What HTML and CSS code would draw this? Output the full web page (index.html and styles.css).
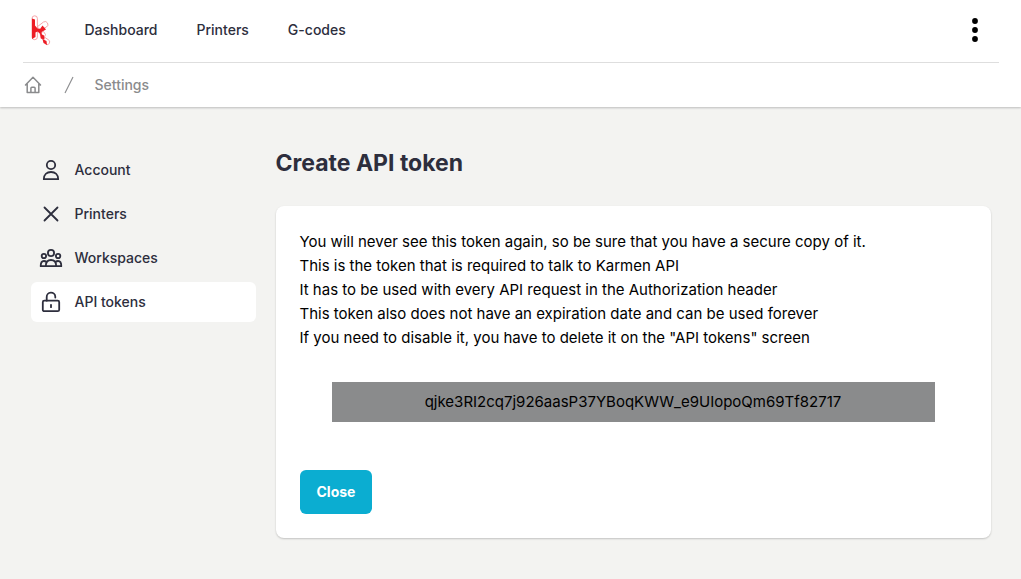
FILE: index.html
```html
<!DOCTYPE html>
<html lang="en">
<head>
<meta charset="utf-8">
<meta name="viewport" content="width=device-width, initial-scale=1">
<title>Create API token</title>
<link rel="stylesheet" href="styles.css">
</head>
<body>
<header class="header">
  <div class="container">
    <div class="topbar">
      <a class="logo" href="#" aria-label="Karmen">
        <svg width="20" height="32" viewBox="0 0 20 32" fill="none">
          <g stroke="#f28f94" stroke-width=".8" fill="#fff">
            <path d="M1 4.500a2.700 2.700 0 0 1 5.400 0v18.500a2.700 2.700 0 0 1-5.400 0z"/>
            <path d="M6 13l6.500-5a2.900 2.900 0 1 1 3 5L10 16z"/>
            <path d="M9 19l3.500-1.500 2 3-1.500 3.500-3 .5z"/>
            <path d="M11.500 25l2.500-1.500 3 2a2.500 2.500 0 1 1-2 5z"/>
          </g>
          <path d="M1 4.500l3 1v6l2.500 3 2.500.5 2.500-3.500 3.500 4-4.500 2.500.5 3.500-4.500-4-2 1v4.500l-3.500 2z" fill="#ed1c24"/>
          <path d="M9 19.500l4 2 .5 4-3.500-1zM11.500 25l4 2 .5 4-3.500-2z" fill="#ed1c24"/>
        </svg>
      </a>
      <nav class="nav">
        <a href="#">Dashboard</a>
        <a href="#">Printers</a>
        <a href="#">G-codes</a>
      </nav>
      <button class="more" type="button" aria-label="Menu">
        <svg width="6" height="26" viewBox="0 0 6 26"><circle cx="3" cy="4" r="2.900"/><circle cx="3" cy="13" r="2.900"/><circle cx="3" cy="22" r="2.900"/></svg>
      </button>
    </div>
    <nav class="crumbs" aria-label="Breadcrumb">
      <a href="#" aria-label="Home">
        <svg width="18" height="18" viewBox="0 0 18 18" fill="none" stroke="currentColor" stroke-width="1.500" stroke-linejoin="round" stroke-linecap="round"><path d="M1.500 9L9 1.300 16.500 9M3.200 7.500v9h11.600v-9M6.900 16.500v-4.300q0-1 1-1h2.200q1 0 1 1v4.300"/></svg>
      </a>
      <svg class="slash" width="10" height="18" viewBox="0 0 10 18" fill="none" stroke="currentColor" stroke-width="1.100"><path d="M1 17L9 1"/></svg>
      <a href="#">Settings</a>
    </nav>
  </div>
</header>
<div class="container page">
  <nav class="sidebar" aria-label="Settings">
    <a href="#">
      <svg width="24" height="24" viewBox="0 0 24 24"><circle cx="12" cy="7" r="4.200"/><path d="M4.800 21.200c0-4.600 3-7.200 7.200-7.200s7.200 2.600 7.200 7.200z"/></svg>
      Account
    </a>
    <a href="#">
      <svg width="24" height="24" viewBox="0 0 24 24"><path d="M5.500 5.500l13 13M18.500 5.500l-13 13"/></svg>
      Printers
    </a>
    <a href="#">
      <svg width="24" height="24" viewBox="0 0 24 24"><circle cx="12" cy="7" r="3.100"/><circle cx="4.900" cy="10" r="2.200"/><circle cx="19.100" cy="10" r="2.200"/><path d="M6.800 20.200c0-3.800 2-6.200 5.200-6.200s5.200 2.400 5.200 6.200zM6.800 20.200H1.700c0-3.300 1-5.200 3.200-5.200q1.500 0 2.500 1M17.200 20.200h5.100c0-3.300-1-5.200-3.200-5.200q-1.500 0-2.500 1"/></svg>
      Workspaces
    </a>
    <a class="active" href="#" aria-current="page">
      <svg width="24" height="24" viewBox="0 0 24 24"><rect x="3.800" y="10.700" width="16.400" height="10.500" rx="1.500"/><path d="M7.700 10.700V7.200a4.300 4.300 0 0 1 8.600-.5v.8M12 14.800v2.400"/></svg>
      API tokens
    </a>
  </nav>
  <main class="content">
    <h1>Create API token</h1>
    <section class="card">
      <p>You will never see this token again, so be sure that you have a secure copy of it.<br>This is the token that is required to talk to Karmen API<br>It has to be used with every API request in the Authorization header<br>This token also does not have an expiration date and can be used forever<br>If you need to disable it, you have to delete it on the "API tokens" screen</p>
      <div class="token">qjke3RI2cq7j926aasP37YBoqKWW_e9UIopoQm69Tf82717</div>
      <button class="close" type="button">Close</button>
    </section>
  </main>
</div>
</body>
</html>
```
FILE: styles.css
```css
* { box-sizing: border-box; }
body {
  margin: 0;
  background: #f3f3f1;
  color: #000;
  font: 15px/24px Inter, "Liberation Sans", sans-serif;
}
a { color: inherit; text-decoration: none; }
svg { display: block; flex: none; }
button { font: inherit; border: 0; cursor: pointer; }
.container { max-width: 976px; margin: 0 auto; }
.header {
  background: #fff;
  box-shadow: 0 1px 2px rgba(0, 0, 0, .22);
  font-size: 14px;
  font-weight: 500;
}
.topbar {
  display: flex;
  align-items: center;
  padding: 14px 16px 16px 8px;
  border-bottom: 1px solid #dedede;
  color: #2d2e3d;
}
.nav { display: flex; gap: 39px; margin-left: 34px; }
.more { display: flex; margin-left: auto; padding: 0 5px; background: none; }
.crumbs {
  display: flex;
  align-items: center;
  height: 44px;
  padding-left: 1px;
  color: #8a8b8d;
}
.slash { margin: 0 21px 0 22px; }
.page {
  display: grid;
  grid-template-columns: 225px minmax(0, 1fr);
  gap: 20px;
  padding: 40px 8px;
}
.sidebar {
  display: flex;
  flex-direction: column;
  gap: 4px;
  padding-top: 3px;
  color: #2d2e3d;
  font-size: 14px;
  font-weight: 500;
}
.sidebar a {
  display: flex;
  align-items: center;
  gap: 12px;
  padding: 8px;
  border-radius: 6px;
}
.sidebar svg { fill: none; stroke: currentColor; stroke-width: 1.8; stroke-linejoin: round; stroke-linecap: round; }
.sidebar .active { background: #fff; }
h1 {
  margin: 0 0 27px;
  color: #2d2e3d;
  font-size: 23px;
  line-height: 32px;
  font-weight: 700;
}
.card {
  padding: 24px;
  border-radius: 8px;
  background: #fff;
  box-shadow: 0 1px 2px rgba(0, 0, 0, .2);
}
.card p { margin: 0; }
.token {
  margin: 32px 32px 48px;
  padding: 8px;
  background: #8a8b8c;
  text-align: center;
}
.close {
  display: block;
  padding: 10px 17px;
  border-radius: 6px;
  background: #0badd1;
  color: #fff;
  font-size: 14px;
  font-weight: 700;
}
```
